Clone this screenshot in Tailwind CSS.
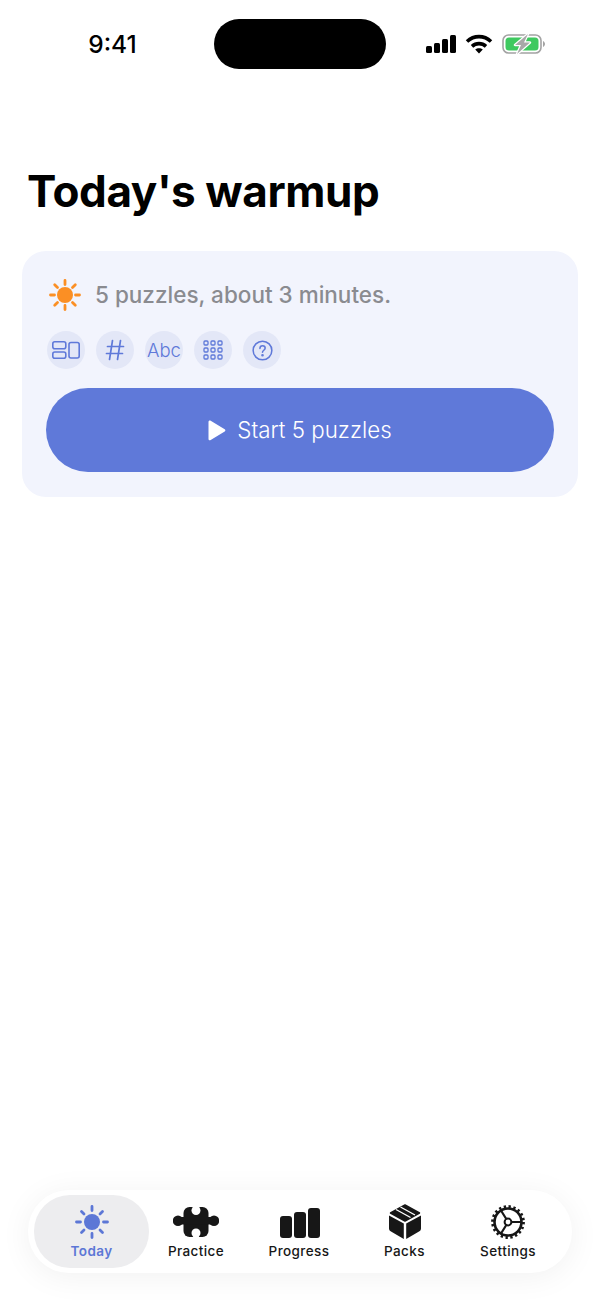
<!doctype html>
<html><head><meta charset="utf-8"><script src="https://cdn.jsdelivr.net/npm/@tailwindcss/browser@4"></script></head>
<body class="bg-white">
<div class="w-[600px] h-[1303px] flex flex-col font-['Inter',sans-serif] bg-white overflow-hidden">
  <div class="h-[88px] shrink-0 pt-[19px] flex items-start">
    <div class="w-[214px] h-[50px] flex items-center justify-center pl-[11px] text-[24.5px] leading-none font-medium text-black">9:41</div>
    <div class="w-[172px] h-[50px] rounded-[25px] bg-black"></div>
    <div class="flex-1 h-[50px] flex items-center pl-[40px] gap-[9px] ">
      <svg width="30" height="20" viewBox="0 0 30 20"><rect x="0" y="12" width="6" height="7" rx="1.5" fill="#000"/><rect x="8" y="9" width="6" height="10" rx="1.5" fill="#000"/><rect x="16" y="5" width="6" height="14" rx="1.5" fill="#000"/><rect x="24" y="1" width="6" height="18" rx="1.5" fill="#000"/></svg>
      <svg width="28" height="20" viewBox="0 0 28 20" fill="none" stroke="#000" stroke-width="3.6"><path d="M2 7.5C9 1 19 1 26 7.5"/><path d="M7 12.3C11 8.7 17 8.7 21 12.3"/><path d="M14 19.5L10.2 15.6C12.3 13.8 15.7 13.8 17.8 15.6Z" fill="#000" stroke="none"/></svg>
      <svg width="43" height="20" viewBox="0 0 43 20"><rect x="1" y="1" width="38" height="18" rx="5.5" fill="none" stroke="#a3a3a3" stroke-width="1.6"/><path d="M41 7v6c1-.5 2-1.600 2-3s-1-2.500-2-3z" fill="#a3a3a3"/><rect x="3.500" y="3.500" width="33" height="13" rx="3.500" fill="#3ec95f"/><path d="M26 0L13 11H19L15 20L28 8.500H22Z" fill="#a8a8a8" stroke="#fff" stroke-width="2.400" paint-order="stroke" stroke-linejoin="round"/></svg>
    </div>
  </div>
  <main class="flex-1 flex flex-col">
    <h1 class="mt-[73px] ml-[27px] text-[44px] leading-[60px] font-bold tracking-[-0.4px] text-black">Today's warmup</h1>
    <section class="mt-[30px] mx-[22px] h-[246px] rounded-[24px] bg-[#f2f4fd] p-[24px] pt-[24px] flex flex-col">
      <div class="flex items-center h-[38px] gap-[13px] ml-[2px] mt-[1px]">
        <svg width="34" height="34" viewBox="0 0 34 34" stroke="#fb8f24" stroke-width="2.800" stroke-linecap="round" fill="none"><circle cx="17" cy="17" r="8" fill="#fb8f24" stroke="none"/><path d="M17 2.500v4M17 27.500v4M2.500 17h4M27.500 17h4M6.700 6.700l2.800 2.800M24.500 24.500l2.800 2.800M6.700 27.300l2.800-2.800M24.500 9.500l2.800-2.800"/></svg>
        <span class="text-[22.5px] leading-none font-[550] text-[#8a8b90]">5 puzzles, about 3 minutes.</span>
      </div>
      <div class="flex gap-[11px] mt-[17px] ml-[1px] text-[#5f79d9]">
        <div class="w-[38px] h-[38px] rounded-full bg-[#e3e7f7] flex items-center justify-center">
          <svg width="28" height="18" viewBox="0 0 28 18" fill="none" stroke="currentColor" stroke-width="1.600"><rect x=".8" y=".8" width="13" height="7" rx="2"/><rect x=".8" y="11" width="13" height="6.200" rx="2"/><rect x="17" y="1.500" width="10.200" height="15.500" rx="2"/></svg>
        </div>
        <div class="w-[38px] h-[38px] rounded-full bg-[#e3e7f7] flex items-center justify-center">
          <svg width="20" height="22" viewBox="0 0 20 22" fill="none" stroke="currentColor" stroke-width="1.700" stroke-linecap="round"><path d="M7.500 1.500L4.500 20.500M15.500 1.500L12.500 20.500M2.500 7.500H18.500M1.500 14.500H17.500"/></svg>
        </div>
        <div class="w-[38px] h-[38px] rounded-full bg-[#e3e7f7] flex items-center justify-center">
          <span class="text-[18.5px] leading-none font-[350]">Abc</span>
        </div>
        <div class="w-[38px] h-[38px] rounded-full bg-[#e3e7f7] flex items-center justify-center">
          <svg width="20" height="20" viewBox="0 0 20 20" fill="none" stroke="currentColor" stroke-width="1.300"><rect x="1" y="1" width="4" height="4" rx="1"/><rect x="8" y="1" width="4" height="4" rx="1"/><rect x="15" y="1" width="4" height="4" rx="1"/><rect x="1" y="8" width="4" height="4" rx="1"/><rect x="8" y="8" width="4" height="4" rx="1"/><rect x="15" y="8" width="4" height="4" rx="1"/><rect x="1" y="15" width="4" height="4" rx="1"/><rect x="8" y="15" width="4" height="4" rx="1"/><rect x="15" y="15" width="4" height="4" rx="1"/></svg>
        </div>
        <div class="w-[38px] h-[38px] rounded-full bg-[#e3e7f7] flex items-center justify-center relative">
          <svg width="21" height="21" viewBox="0 0 22 22" fill="none" stroke="currentColor" stroke-width="1.600" stroke-linecap="round"><circle cx="11" cy="11" r="9.800"/><path d="M8.300 8.800c0-1.700 1.200-2.800 2.800-2.800s2.700 1 2.700 2.500c0 2.200-2.800 2.300-2.800 4.400"/><circle cx="11" cy="16" r=".6" fill="currentColor"/></svg>
        </div>
      </div>
      <button class="mt-[19px] h-[84px] rounded-[42px] bg-[#5f79d9] flex items-center justify-center gap-[11px] text-white text-[22.3px] leading-none font-[350]">
        <svg width="18" height="21" viewBox="0 0 18 21"><path d="M.5 2C.5.800 1.600.200 2.700.800l14 8.500c.9.500.9 1.800 0 2.300l-14 8.500C1.600 20.700.5 20.200.5 19z" fill="#fff"/></svg>
        <span>Start 5 puzzles</span>
      </button>
    </section>
  </main>
  <nav class="mb-[30px] mx-[28px] h-[83px] shrink-0 rounded-[41px] bg-white shadow-[0_4px_32px_rgba(0,0,0,0.06)] px-[6px] py-[5px] flex items-stretch">
    <div class="w-[115px] rounded-[36px] bg-[#ededef] flex flex-col items-center pt-[9px] gap-[3px] text-[#5c77d6]">
      <svg width="36" height="36" viewBox="0 0 36 36" fill="none" stroke="currentColor" stroke-width="2.800" stroke-linecap="round"><circle cx="18" cy="18" r="8" fill="currentColor" stroke="none"/><path d="M18 2.500v4M18 29.500v4M2.500 18h4M29.500 18h4M7.500 7.500l2.500 2.500M26 26l2.500 2.500M7.500 28.500l2.500-2.500M26 10l2.500-2.500"/></svg>
      <span class="text-[13.5px] leading-[16px] font-semibold tracking-[0.4px]">Today</span>
    </div>
    <div class="w-[94px] flex flex-col items-center pt-[9px] gap-[3px] text-[#171717]">
      <svg width="46" height="36" viewBox="8 4 46 36"><g fill="currentColor"><rect x="18.500" y="7" width="25" height="30" rx="6"/><circle cx="13" cy="20.700" r="5.200"/><circle cx="49" cy="20.700" r="5.200"/><rect x="13" y="17" width="36" height="7.500"/></g><g fill="#fff"><circle cx="31" cy="10.500" r="4.500"/><rect x="28.500" y="5" width="5" height="5"/><circle cx="31" cy="33" r="4.500"/><rect x="28.500" y="33" width="5" height="6"/></g></svg>
      <span class="text-[13.5px] leading-[16px] font-medium tracking-[0.4px]">Practice</span>
    </div>
    <div class="w-[112px] flex flex-col items-center pt-[9px] gap-[3px] text-[#171717]">
      <svg class="ml-[2px]" width="42" height="36" viewBox="0 -1 42 36" fill="currentColor"><rect x="1" y="11" width="12" height="22" rx="3"/><rect x="15" y="7" width="12" height="26" rx="3"/><rect x="29" y="3" width="12" height="30" rx="3"/></svg>
      <span class="text-[13.5px] leading-[16px] font-medium tracking-[0.4px]">Progress</span>
    </div>
    <div class="w-[99px] flex flex-col items-center pt-[9px] gap-[3px] text-[#171717]">
      <svg width="34" height="36" viewBox="8 4 34 36" fill="currentColor"><path d="M25 5L39.500 13L25 21L10.500 13Z" stroke="currentColor" stroke-width="1.500" stroke-linejoin="round"/><path d="M16 9.500L30.500 17.500M20.500 7L35 15" stroke="#fff" stroke-width="1.400"/><path d="M9 15.500L23.800 23.500V39L11 31.500C10 31 9 30 9 28.500Z"/><path d="M41 15.500L26.200 23.500V39L39 31.500C40 31 41 30 41 28.500Z"/></svg>
      <span class="text-[13.5px] leading-[16px] font-medium tracking-[0.4px]">Packs</span>
    </div>
    <div class="flex-1 pr-[4px] flex flex-col items-center pt-[9px] gap-[3px] text-[#171717]">
      <svg width="36" height="36" viewBox="0 0 36 36" fill="none" stroke="currentColor"><circle cx="18" cy="18" r="13.500" stroke-width="2.600"/><circle cx="18" cy="18" r="15.200" stroke-width="3.400" stroke-dasharray="2.300 2.480"/><circle cx="18" cy="18" r="3.400" stroke-width="2"/><path d="M21.400 18H31M16.300 15L11 6.500M16.300 21L11 29.500" stroke-width="2.200"/></svg>
      <span class="text-[13.5px] leading-[16px] font-medium tracking-[0.4px]">Settings</span>
    </div>
  </nav>
</div>
</body></html>
